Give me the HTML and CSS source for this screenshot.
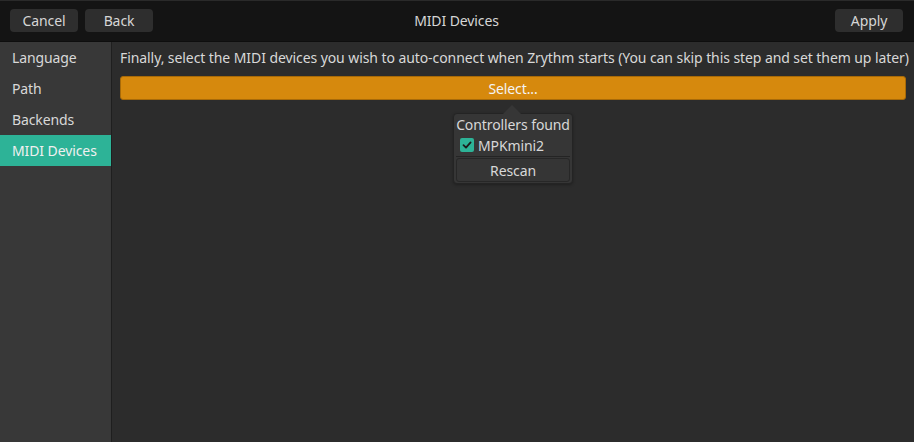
FILE: index.html
```html
<!DOCTYPE html>
<html>
<head>
<meta charset="utf-8">
<link rel="stylesheet" href="styles.css">
</head>
<body>
<div class="window">
  <header class="headerbar">
    <div class="hb-left">
      <button class="hbtn">Cancel</button>
      <button class="hbtn">Back</button>
    </div>
    <div class="title">MIDI Devices</div>
    <div class="hb-right">
      <button class="hbtn">Apply</button>
    </div>
  </header>
  <div class="body">
    <nav class="sidebar">
      <div class="item">Language</div>
      <div class="item">Path</div>
      <div class="item">Backends</div>
      <div class="item selected">MIDI Devices</div>
    </nav>
    <main class="content">
      <p class="intro">Finally, select the MIDI devices you wish to auto-connect when Zrythm starts (You can skip this step and set them up later)</p>
      <div class="select-wrap">
        <button class="select-btn">Select...</button>
        <div class="popover">
          <div class="arrow"></div>
          <div class="pop-title">Controllers found</div>
          <label class="check-row">
            <span class="checkbox">
              <svg width="10" height="10" viewBox="0 0 10 10"><path d="M1.5 5.2 L4 7.6 L8.6 2.4" fill="none" stroke="#1b1b1b" stroke-width="1.8" stroke-linecap="round" stroke-linejoin="round"/></svg>
            </span>
            <span>MPKmini2</span>
          </label>
          <div class="sep"></div>
          <button class="rescan">Rescan</button>
        </div>
      </div>
    </main>
  </div>
</div>
</body>
</html>
```
FILE: styles.css
```css
* { box-sizing: border-box; }
html, body { margin: 0; padding: 0; }
body {
  width: 914px;
  height: 442px;
  overflow: hidden;
  background: #2c2c2c;
  font-family: "Noto Sans", "DejaVu Sans", sans-serif;
  font-size: 14px;
  letter-spacing: -0.1px;
  color: #e0e0e0;
}
.window { display: flex; flex-direction: column; height: 442px; }
.headerbar {
  height: 42px;
  flex: none;
  background: #141414;
  border-top: 1px solid #2a2a2a;
  border-bottom: 1px solid #0e0e0e;
  display: grid;
  grid-template-columns: 1fr auto 1fr;
  align-items: center;
  padding: 0 11px 1px 10px;
}
.hb-left { display: flex; gap: 7px; }
.hb-right { display: flex; justify-content: flex-end; }
.hbtn {
  width: 68px;
  height: 23px;
  background: #2e2e2e;
  border: none;
  border-radius: 4px;
  color: #d6d6d6;
  font-family: inherit;
  font-size: 14px;
  letter-spacing: inherit;
  padding: 0;
  line-height: 23px;
}
.title { color: #d6d6d6; font-size: 14px; }
.body { flex: 1; display: flex; }
.sidebar {
  width: 112px;
  flex: none;
  background: #383838;
  border-right: 1px solid #1f1f1f;
}
.item {
  height: 31px;
  line-height: 31px;
  padding-left: 12px;
  color: #d8d8d8;
}
.item.selected { background: #2db397; color: #f0f0f0; }
.content { flex: 1; padding: 6px 8px 0 8px; }
.intro { margin: 0; height: 28px; line-height: 20px; color: #d8d8d8; white-space: nowrap; letter-spacing: -0.08px; }
.select-wrap { position: relative; }
.select-btn {
  display: block;
  width: 786px;
  height: 24px;
  background: #d6890d;
  border: 1px solid #a86a08;
  border-radius: 3px;
  color: #f4f4f4;
  font-family: inherit;
  font-size: 14px;
  letter-spacing: inherit;
  padding: 0;
}
.popover {
  position: absolute;
  left: 333px;
  top: 37px;
  width: 120px;
  background: #363636;
  border: 1px solid #242424;
  border-radius: 4px;
  padding: 1px 2px 1px 2px;
  display: flex;
  flex-direction: column;
  align-items: stretch;
  box-shadow: 0 1px 3px rgba(0,0,0,0.3);
  white-space: nowrap;
}
.arrow {
  position: absolute;
  top: -9px;
  left: 49px;
  width: 0; height: 0;
  border-left: 9px solid transparent;
  border-right: 9px solid transparent;
  border-bottom: 9px solid #363636;
}
.pop-title { text-align: center; height: 20px; line-height: 20px; color: #d8d8d8; }
.check-row { display: flex; align-items: center; gap: 4px; height: 20px; padding-left: 4px; color: #d8d8d8; }
.checkbox {
  width: 14px; height: 14px;
  background: #2db397;
  border-radius: 2px;
  display: flex; align-items: center; justify-content: center;
}
.sep { height: 1px; background: #242424; margin: 1px 0 1px; }
.rescan {
  height: 24px;
  background: #353535;
  border: 1px solid #272727;
  border-radius: 3px;
  color: #d8d8d8;
  font-family: inherit;
  font-size: 14px;
  letter-spacing: inherit;
  padding: 0;
}
```
